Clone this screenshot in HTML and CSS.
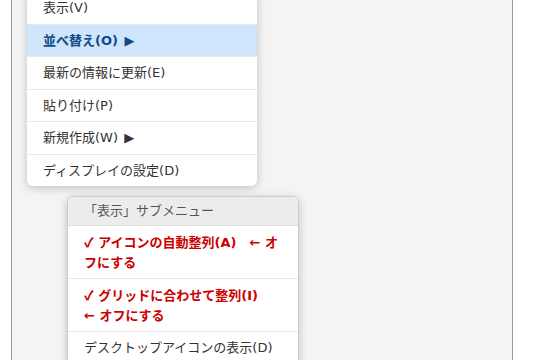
FILE: index.html
```html
<!DOCTYPE html>
<html lang="ja">
<head>
    <meta charset="UTF-8">
    <meta name="viewport" content="width=device-width, initial-scale=1.0">
    <title>デスクトップの右クリックメニュー</title>
    <link rel="stylesheet" href="styles.css">
</head>
<body>
<div class="desktop">
    <ul class="menu">
        <li class="item">表示(V)</li>
        <li class="item active">並べ替え(O) <span class="arrow">▶</span></li>
        <li class="item">最新の情報に更新(E)</li>
        <li class="item">貼り付け(P)</li>
        <li class="item">新規作成(W) <span class="arrow">▶</span></li>
        <li class="item">ディスプレイの設定(D)</li>
    </ul>

    <ul class="menu submenu">
        <li class="header">「表示」サブメニュー</li>
        <li class="item checked"><span class="check">✓</span> アイコンの自動整列(A)　← オフにする</li>
        <li class="item checked"><span class="check">✓</span> グリッドに合わせて整列(I)　← オフにする</li>
        <li class="item">デスクトップアイコンの表示(D)</li>
    </ul>
</div>
</body>
</html>
```

FILE: styles.css
```css
body {
    font-family: "DejaVu Sans", "Noto Sans CJK JP", sans-serif;
    background-color: #ffffff;
    color: #333333;
    margin: 0;
    padding: 0;
}

.desktop {
    margin: -8px 25px 0 11px;
    padding: 0 15px 40px 15px;
    background-color: #f4f4f4;
    border-left: 1px solid #9a9a9a;
    border-right: 1px solid #9a9a9a;
}

.menu {
    list-style: none;
    width: 230px;
    margin: 0;
    padding: 0;
    background-color: #ffffff;
    border-radius: 6px;
    box-shadow: 0 2px 8px rgba(0, 0, 0, 0.22);
    overflow: hidden;
}

.item {
    font-size: 13px;
    line-height: 19.5px;
    padding: 6px 16px;
    border-bottom: 1px solid #e8e8e8;
}

.item:last-child {
    border-bottom: none;
}

.item.active {
    background-color: #cfe5fb;
    color: #114a86;
    font-weight: bold;
}

.arrow {
    font-size: 13px;
    margin-left: 2px;
}

.submenu {
    margin: 10px 0 0 40px;
    border: 1px solid #cccccc;
}

.header {
    font-size: 13px;
    line-height: 18px;
    padding: 5px 16px 5px;
    background-color: #ececec;
    color: #555555;
    border-bottom: 1px solid #dddddd;
}

.item.checked {
    color: #cc0000;
    font-weight: bold;
    padding-right: 18px;
}

.check {
    font-family: "Noto Sans CJK JP", sans-serif;
    font-weight: 900;
}
```
